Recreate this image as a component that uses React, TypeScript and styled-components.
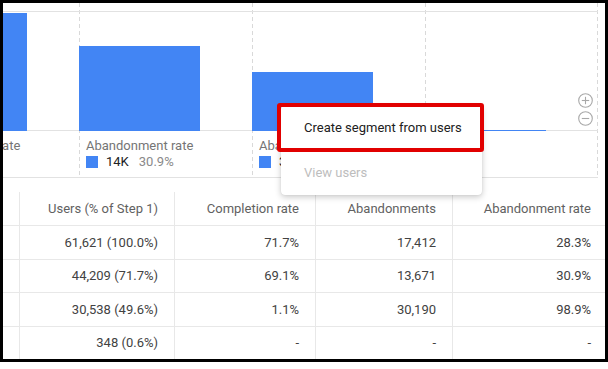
import styled, { createGlobalStyle } from 'styled-components';

const GlobalStyle = createGlobalStyle`
    html, body {
        margin: 0;
        padding: 0;
        background: #fff;
        font-family: Roboto, "Liberation Sans", sans-serif;
    }
`;

type Step = {
    pct: number;
    abandoned?: string;
    rate?: string;
};

const steps: Step[] = [
    { pct: 100, abandoned: '17K', rate: '28.3%' },
    { pct: 71.7, abandoned: '14K', rate: '30.9%' },
    { pct: 49.6, abandoned: '30K', rate: '98.9%' },
    { pct: 0.6 },
];

const rows = [
    ['61,621 (100.0%)', '71.7%', '17,412', '28.3%'],
    ['44,209 (71.7%)', '69.1%', '13,671', '30.9%'],
    ['30,538 (49.6%)', '1.1%', '30,190', '98.9%'],
    ['348 (0.6%)', '-', '-', '-'],
];

const headers = ['Users (% of Step 1)', 'Completion rate', 'Abandonments', 'Abandonment rate'];

const dash = 'repeating-linear-gradient(to bottom, #d9d9d9 0 4px, transparent 4px 7px)';

const Frame = styled.div`
    box-sizing: border-box;
    width: 608px;
    height: 362px;
    border: 3px solid #000;
`;
const Inner = styled.div`
    position: relative;
    width: 100%;
    height: 100%;
    overflow: hidden;
`;
const Chart = styled.div`
    display: flex;
    margin-left: -97px;
`;
const Column = styled.div<{ $last?: boolean }>`
    flex: 0 0 173px;
    width: 173px;
    padding-top: 8px;
    border-bottom: 1px solid #e2e2e2;
    background-image: ${dash}${(p) => (p.$last ? `, ${dash}` : '')};
    background-size: 1px 100%;
    background-repeat: no-repeat;
    background-position: left top${(p) => (p.$last ? ', 172px top' : '')};
`;
const Plot = styled.div`
    height: 119px;
    border-top: 1px solid #e2e2e2;
    display: flex;
    align-items: flex-end;
    background: linear-gradient(#e2e2e2, #e2e2e2) left bottom / 100% 1px no-repeat;
`;
const Bar = styled.div`
    width: 121px;
    background: #4285f4;
`;
const Caption = styled.div`
    height: 46px;
    box-sizing: border-box;
    padding: 7px 0 0 7px;
    font-size: 13px;
    line-height: 16px;
    white-space: nowrap;
`;
const Label = styled.div`
    color: #757575;
`;
const Legend = styled.div`
    display: flex;
    align-items: center;
    gap: 8px;
`;
const Swatch = styled.span`
    width: 12px;
    height: 12px;
    background: #4285f4;
`;
const Value = styled.span`
    color: #202124;
`;
const Rate = styled.span`
    color: #8a8a8a;
    margin-left: 2px;
`;
const Zoom = styled.div`
    position: absolute;
    top: 90px;
    right: 12px;
    display: flex;
    flex-direction: column;
    gap: 3px;
`;
const Table = styled.div`
    margin-top: 14px;
    font-size: 13px;
`;
const Row = styled.div<{ $head?: boolean }>`
    display: grid;
    grid-template-columns: 14px 158px 141px 137px 155px;
    height: ${(p) => (p.$head ? '34px' : '33.5px')};
    border-bottom: 1px solid #e8e8e8;
    box-sizing: border-box;
    color: ${(p) => (p.$head ? '#616161' : '#424242')};
`;
const Cell = styled.div`
    box-sizing: border-box;
    border-right: 1px solid #e8e8e8;
    padding-right: 16px;
    display: flex;
    align-items: center;
    justify-content: flex-end;
    white-space: nowrap;
`;
const Menu = styled.div`
    position: absolute;
    left: 278px;
    top: 102px;
    width: 201px;
    background: #fff;
    border-radius: 4px;
    box-shadow: 0 2px 6px rgba(0, 0, 0, 0.22), 0 0 1px rgba(0, 0, 0, 0.15);
`;
const MenuItem = styled.div<{ $disabled?: boolean }>`
    height: 45px;
    display: flex;
    align-items: center;
    padding-left: 23px;
    font-size: 13px;
    color: ${(p) => (p.$disabled ? '#bdbdbd' : '#212121')};
`;
const Highlight = styled.div`
    position: absolute;
    left: 274px;
    top: 100px;
    width: 207px;
    height: 49px;
    box-sizing: border-box;
    border: 4px solid #e10000;
    border-radius: 3px;
`;

const ZoomIcon = ({ plus }: { plus?: boolean }) => (
    <svg width="15" height="15" viewBox="0 0 15 15" fill="none" stroke="#a8a8a8" strokeWidth="1.1">
        <circle cx="7.5" cy="7.5" r="6.8" />
        <line x1="3.8" y1="7.5" x2="11.2" y2="7.5" />
        {plus && <line x1="7.5" y1="3.8" x2="7.5" y2="11.2" />}
    </svg>
);

const App = () => {
    return (
        <>
            <GlobalStyle />
            <Frame>
                <Inner>
                    <Chart>
                        {steps.map((step, i) => (
                            <Column key={i} $last={i === steps.length - 1}>
                                <Plot>
                                    <Bar style={{ height: Math.max(1, Math.round(step.pct * 1.18)) }} />
                                </Plot>
                                <Caption>
                                    {step.abandoned && (
                                        <>
                                            <Label>Abandonment rate</Label>
                                            <Legend>
                                                <Swatch />
                                                <Value>{step.abandoned}</Value>
                                                <Rate>{step.rate}</Rate>
                                            </Legend>
                                        </>
                                    )}
                                </Caption>
                            </Column>
                        ))}
                    </Chart>
                    <Zoom>
                        <ZoomIcon plus />
                        <ZoomIcon />
                    </Zoom>
                    <Table>
                        <Row $head>
                            <Cell />
                            {headers.map((h) => (
                                <Cell key={h}>{h}</Cell>
                            ))}
                        </Row>
                        {rows.map((row, i) => (
                            <Row key={i}>
                                <Cell />
                                {row.map((v, j) => (
                                    <Cell key={j}>{v}</Cell>
                                ))}
                            </Row>
                        ))}
                    </Table>
                    <Menu>
                        <MenuItem>Create segment from users</MenuItem>
                        <MenuItem $disabled>View users</MenuItem>
                    </Menu>
                    <Highlight />
                </Inner>
            </Frame>
        </>
    );
};
export default App;
